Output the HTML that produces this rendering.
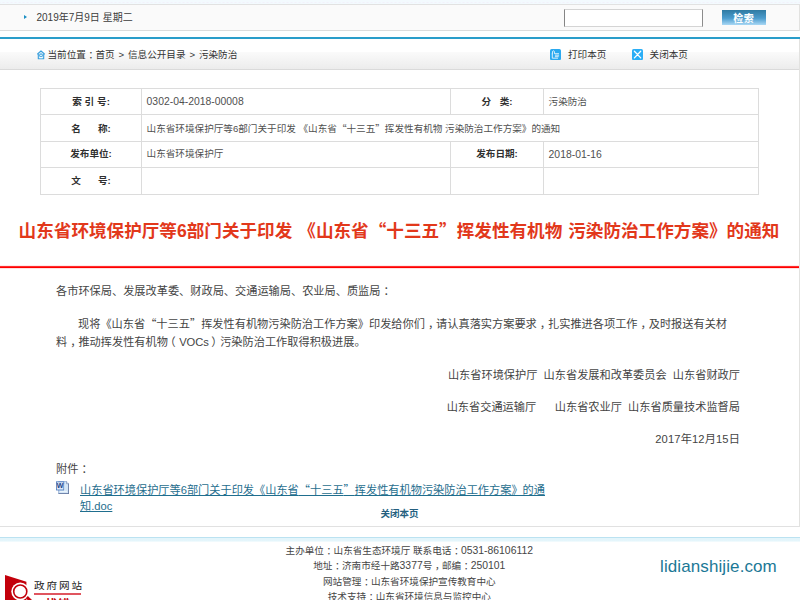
<!DOCTYPE html>
<html lang="zh-CN">
<head>
<meta charset="utf-8">
<title>山东省环境保护厅等6部门关于印发《山东省“十三五”挥发性有机物污染防治工作方案》的通知</title>
<style>
html,body{margin:0;padding:0;}
body{width:800px;height:600px;overflow:hidden;position:relative;background:#fff;
  font-family:"Liberation Sans","Noto Sans CJK SC",sans-serif;font-size:12px;color:#333;}
.q{font-family:"Noto Sans CJK SC",sans-serif;}
.c{position:relative;left:0.27em;}
.pl{position:relative;left:-0.3em;}.pr{position:relative;left:0.2em;}
.abs{position:absolute;white-space:nowrap;}
/* top bar */
#topstrip{left:0;top:0;width:800px;height:4px;background:#f3fafe radial-gradient(circle at 2px 2.3px,#f3ebf9 0.3px,rgba(243,235,249,0) 0.9px) 1.5px 0/4px 4px;}
#topbar{left:0;top:4px;width:800px;height:25px;background:#fafafa;border-top:1px solid #e2e2e2;border-bottom:1px solid #dcdcdc;box-sizing:content-box;}
#tri{left:24px;top:14.7px;width:0;height:0;border-left:3px solid #1c8fc4;border-top:2.5px solid transparent;border-bottom:2.5px solid transparent;}
#date{left:36.5px;top:10px;line-height:16px;font-size:10px;color:#3c3c3c;}
#q{left:564px;top:9px;width:137px;height:16px;border:1px solid #d4d4d4;border-left-color:#858585;border-right-color:#8c8c8c;background:#fff;box-sizing:content-box;}
#btn{left:722.2px;top:9.8px;width:43.4px;height:15px;background:linear-gradient(#2f7aa2,#4c9ccd 55%,#a9d8f5);color:#fff;font-weight:bold;font-size:10px;line-height:17.6px;text-align:center;letter-spacing:0.5px;text-indent:-0.4px;}
#blueline{left:0;top:37.3px;width:800px;height:1.8px;background:#2a9dca;}
#crumbbar{left:0;top:39px;width:800px;height:30.3px;background:linear-gradient(#fff 42%,#fafafa 45%,#ececec);border-bottom:1.2px solid #dadada;}
#crumb{left:47.5px;top:46.5px;line-height:16px;font-size:9.6px;word-spacing:1.2px;color:#333;}
.tool{top:46.5px;line-height:16px;font-size:9.6px;color:#333;}
/* table */
#info{left:40px;top:88px;border-collapse:collapse;table-layout:fixed;width:718px;font-size:9.6px;}
#info tr.a td{height:26px;}#info tr.b td{height:27px;}
#info tr:nth-child(1) td{padding-bottom:2px;}#info tr:nth-child(2) td{padding-bottom:0.6px;}#info tr:nth-child(3) td{padding-bottom:2.8px;}#info tr:nth-child(4) td{padding-bottom:2.6px;}
#info td.l{word-spacing:0.2px;}
#info td.n{padding-bottom:0 !important;}
.n{font-size:10.4px;}
#info td{border:1px solid #dcdcdc;padding:0;box-sizing:border-box;white-space:nowrap;overflow:visible;}
#info td.l{text-align:center;font-weight:bold;color:#303030;}
#info td.v{padding-left:4.6px;color:#505050;}
/* title */
#title{left:-1px;top:217.6px;width:800px;text-align:center;font-size:17.6px;word-spacing:1.1px;font-weight:bold;color:#e2381b;line-height:24px;}
#redline{left:0;top:265px;width:799px;height:4px;background:linear-gradient(rgba(255,0,0,.08) 0 25%,rgba(255,0,0,.82) 25% 50%,#f00 50% 75%,rgba(255,0,0,.12) 75% 100%);}
.p{font-size:11.2px;color:#444;line-height:16px;}
#att a{color:#1f6e8e;text-decoration:underline;}
#closep{left:-0.5px;top:506.9px;width:800px;text-align:center;font-size:9.5px;font-weight:bold;color:#245f7f;line-height:14px;}
#footline1{left:0;top:526px;width:800px;height:1px;background:#e1e1e1;}
#footband{left:0;top:536.6px;width:800px;height:4px;background:linear-gradient(#e3f5fb 60%,#f6fcfe);border-top:1px solid #bbe2f1;}
.f{left:9.3px;width:800px;text-align:center;font-size:9.6px;color:#454545;line-height:16px;}
.f .n{font-size:10.4px;}
#gov{left:33.7px;top:578.2px;font-size:9px;letter-spacing:1.6px;transform:scaleX(1.18);transform-origin:0 0;color:#222;line-height:16px;}
#govline{left:33.5px;top:593.2px;width:47.2px;height:1.6px;background:#e0555f;}
#zhaocuo{left:45.5px;top:597px;font-size:12px;font-weight:bold;color:#c3000b;letter-spacing:0.5px;line-height:16px;}
#wm{left:660px;top:555px;font-size:17px;color:#1b7896;line-height:24px;text-shadow:0 0 2px #fff;letter-spacing:0.1px;}
</style>
</head>
<body>
<div class="abs" id="topstrip"></div>
<div class="abs" id="topbar"></div>
<div class="abs" id="tri"></div>
<div class="abs" id="date">2019年7月9日 星期二</div>
<div class="abs" id="q"></div>
<div class="abs" id="btn">检索</div>
<div class="abs" id="blueline"></div>
<div class="abs" id="crumbbar"></div>
<svg class="abs" style="left:36.5px;top:49.5px" width="8" height="10" viewBox="0 0 8 10"><path d="M4 0.8 L7.4 4 L6.7 4 L6.7 8.8 L1.3 8.8 L1.3 4 L0.6 4 Z" fill="#d9effb" stroke="#3a9fdc" stroke-width="1.1" stroke-linejoin="round"/><circle cx="4" cy="5.4" r="1.5" fill="none" stroke="#3a9fdc" stroke-width="1"/><rect x="2.6" y="7.2" width="2.8" height="1" fill="#fff"/></svg>
<svg class="abs" style="left:549.7px;top:48.8px" width="11" height="11.2" viewBox="0 0 11 11.2"><rect x="0" y="0" width="11" height="11.2" rx="1.6" fill="#2aa9ef"/><path d="M2.3 4.9 L2.3 9.2 L7.6 9.2 M2.3 4.9 L2.6 2.3 Q3.4 1.2 4.3 2.3 L4.5 4.7 L8.6 4.7 M5.3 6.2 L8.7 6.2 M5.3 7.7 L8.3 7.7" fill="none" stroke="#fff" stroke-width="0.85" stroke-linecap="round" stroke-linejoin="round" opacity="0.95"/></svg>
<svg class="abs" style="left:632px;top:48.8px" width="11" height="11.2" viewBox="0 0 11 11.2"><rect x="0" y="0" width="11" height="11.2" rx="1.6" fill="#2aaef6"/><path d="M2.4 2.3 L8.7 8.9 M8.7 2.3 L2.4 8.9" fill="none" stroke="#fff" stroke-width="1.3" stroke-linecap="round"/></svg>
<div class="abs" id="crumb">当前位置<span class="c">：</span>首页 &gt; 信息公开目录 &gt; 污染防治</div>
<div class="abs tool" style="left:568px">打印本页</div>
<div class="abs tool" style="left:649.6px">关闭本页</div>

<table class="abs" id="info">
<colgroup><col style="width:101px"><col style="width:309px"><col style="width:93px"><col style="width:215px"></colgroup>
<tr class="a"><td class="l">索 引 号:</td><td class="v n">0302-04-2018-00008</td><td class="l">分&nbsp;&nbsp; 类:</td><td class="v">污染防治</td></tr>
<tr class="b"><td class="l">名&nbsp;&nbsp;&nbsp;&nbsp;&nbsp; 称:</td><td class="v" colspan="3">山东省环境保护厅等6部门关于印发 《山东省<span class="q">“</span>十三五<span class="q">”</span>挥发性有机物 污染防治工作方案》的通知</td></tr>
<tr class="a"><td class="l">发布单位:</td><td class="v">山东省环境保护厅</td><td class="l">发布日期:</td><td class="v n">2018-01-16</td></tr>
<tr class="b"><td class="l">文&nbsp;&nbsp;&nbsp;&nbsp;&nbsp; 号:</td><td class="v"></td><td class="l"></td><td class="v"></td></tr>
</table>

<div class="abs" id="title">山东省环境保护厅等6部门关于印发 《山东省<span class="q">“</span>十三五<span class="q">”</span>挥发性有机物 污染防治工作方案》的通知</div>
<div class="abs" id="redline"></div>

<div class="abs p" style="left:56px;top:282.5px">各市环保局、发展改革委、财政局、交通运输局、农业局、质监局<span class="c">：</span></div>
<div class="abs p" style="left:78px;top:315px">现将《山东省<span class="q">“</span>十三五<span class="q">”</span>挥发性有机物污染防治工作方案》印发给你们<span class="c">，</span>请认真落实方案要求<span class="c">，</span>扎实推进各项工作<span class="c">，</span>及时报送有关材</div>
<div class="abs p" style="left:56px;top:334px">料<span class="c">，</span>推动挥发性有机物<span class="pl">（</span>VOCs<span class="pr">）</span>污染防治工作取得积极进展。</div>
<div class="abs p" style="right:60px;top:367px">山东省环境保护厅&nbsp; 山东省发展和改革委员会&nbsp; 山东省财政厅</div>
<div class="abs p" style="right:60px;top:399px">山东省交通运输厅&nbsp;&nbsp;&nbsp;&nbsp;&nbsp; 山东省农业厅&nbsp; 山东省质量技术监督局</div>
<div class="abs p" style="right:60px;top:431px;letter-spacing:0.13px">2017年12月15日</div>
<div class="abs p" style="left:56px;top:461px">附件<span class="c">：</span></div>
<svg class="abs" style="left:56px;top:480.6px" width="13.4" height="13.4" viewBox="0 0 13.4 13.4"><path d="M2.6 0.5 L10.6 0.5 L12.8 2.7 L12.8 12.8 L2.6 12.8 Z" fill="#d3e5f6" stroke="#8aa5cf" stroke-width="0.7"/><path d="M12.8 2.7 L12.8 12.8 L2.6 12.8" fill="none" stroke="#4e628f" stroke-width="0.9"/><path d="M10.6 0.5 L10.6 2.7 L12.8 2.7" fill="#fff" stroke="#5a74a6" stroke-width="0.6"/><path d="M8.6 3 V9.8 M4 10.4 H11" stroke="#f4f9fe" stroke-width="0.8"/><rect x="0.4" y="0.8" width="7.4" height="8.2" fill="#dbe8f7" stroke="#4a78bd" stroke-width="0.8"/><text x="4.1" y="7.5" font-family="Liberation Sans, sans-serif" font-size="7" font-weight="bold" fill="#1f3f86" text-anchor="middle">W</text></svg>
<div class="abs p" id="att" style="left:80px;top:481px;white-space:normal;width:480px;line-height:16px"><a>山东省环境保护厅等6部门关于印发《山东省<span class="q">“</span>十三五<span class="q">”</span>挥发性有机物污染防治工作方案》的通知.doc</a></div>
<div class="abs" id="closep">关闭本页</div>
<div class="abs" id="footline1"></div>
<div class="abs" style="left:798.6px;top:5px;width:1px;height:26px;background:#e2e2e0"></div>
<div class="abs" style="left:798.6px;top:39px;width:1px;height:488px;background:#e2e2e0"></div>
<div class="abs" id="footband"></div>
<div class="abs f" style="top:542.5px">主办单位<span class="c">：</span>山东省生态环境厅 联系电话<span class="c">：</span><span class="n">0531-86106112</span></div>
<div class="abs f" style="top:558px">地址<span class="c">：</span>济南市经十路<span class="n">3377</span>号<span class="c">，</span>邮编<span class="c">：</span><span class="n">250101</span></div>
<div class="abs f" style="top:573.7px">网站管理<span class="c">：</span>山东省环境保护宣传教育中心</div>
<div class="abs f" style="top:589.3px">技术支持<span class="c">：</span>山东省环境信息与监控中心</div>
<svg class="abs" style="left:0;top:570px" width="40" height="30" viewBox="0 0 40 30"><path d="M5 5 L26.4 11.8 L26.4 30 L5 30 Z" fill="#c3000b"/><circle cx="20.25" cy="21.5" r="9" fill="#fff"/><circle cx="20.25" cy="21.5" r="6.55" fill="#fff" stroke="#c3000b" stroke-width="1.6"/><path d="M26.8 27.2 L31 31" stroke="#c3000b" stroke-width="3"/></svg>
<div class="abs" id="gov">政府网站</div>
<div class="abs" id="govline"></div>
<div class="abs" id="zhaocuo">找错</div>
<div class="abs" id="wm">lidianshijie.com</div>
</body>
</html>
